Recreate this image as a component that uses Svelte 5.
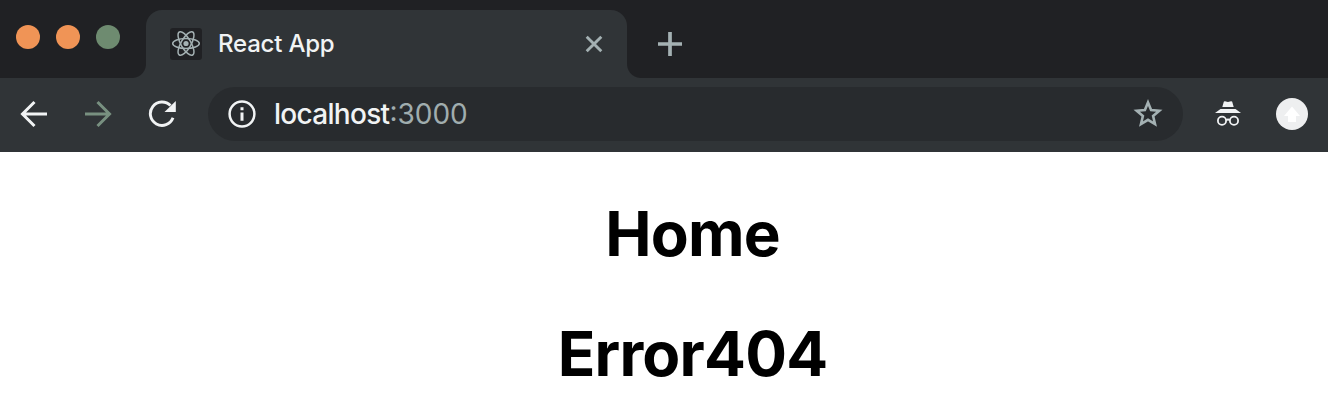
<script>
  const lights = ['#f09456', '#f09456', '#6e8b70'];
  const headings = ['Home', 'Error404'];
</script>

<div class="window">
  <header class="tabs">
    <div class="lights">
      {#each lights as color}
        <span class="light" style="background:{color}"></span>
      {/each}
    </div>
    <div class="tab">
      <svg class="favicon" viewBox="0 0 32 32" width="32" height="32">
        <rect width="32" height="32" rx="3" fill="#202124" />
        <g fill="none" stroke="#a4b1b3" stroke-width="1.5">
          <ellipse cx="16" cy="15.5" rx="13.3" ry="5" />
          <ellipse cx="16" cy="15.5" rx="13.3" ry="5" transform="rotate(60 16 15.5)" />
          <ellipse cx="16" cy="15.5" rx="13.3" ry="5" transform="rotate(120 16 15.5)" />
        </g>
        <circle cx="16" cy="15.5" r="2.6" fill="#a4b1b3" />
      </svg>
      <span class="title">React App</span>
      <svg class="close" viewBox="0 0 18 18" width="18" height="18">
        <path d="M1.7 1.7 16.3 16.3M16.3 1.7 1.7 16.3" stroke="#a4b1b3" stroke-width="2.9" />
      </svg>
    </div>
    <svg class="plus" viewBox="0 0 24 24" width="24" height="24">
      <path d="M12 0V24M0 12H24" stroke="#a4b1b3" stroke-width="3.7" />
    </svg>
  </header>

  <nav class="toolbar">
    <svg viewBox="0 0 28 28" width="28" height="28">
      <path d="M27 14H3M14.5 2 2.5 14 14.5 26" fill="none" stroke="#f1f3f4" stroke-width="3" />
    </svg>
    <svg class="forward" viewBox="0 0 28 28" width="28" height="28">
      <path d="M1 14H25M13.5 2 25.5 14 13.5 26" fill="none" stroke="#789080" stroke-width="3" />
    </svg>
    <svg class="reload" viewBox="0 0 28 28" width="28" height="28">
      <path d="M22.5 5.6A11.7 11.7 0 1 0 25 17.8" fill="none" stroke="#f1f3f4" stroke-width="2.9" />
      <path d="M27.8 .9V12.1H16.5Z" fill="#f1f3f4" />
    </svg>
    <div class="address">
      <svg class="info" viewBox="0 0 28 28" width="28" height="28">
        <circle cx="14" cy="14" r="12.4" fill="none" stroke="#f1f3f4" stroke-width="2.5" />
        <path d="M14 7.2V10.2M14 12.5V20.8" stroke="#f1f3f4" stroke-width="3" />
      </svg>
      <span class="url"><span class="host">localhost</span><span class="port">:3000</span></span>
      <svg class="star" viewBox="0 0 30 30" width="30" height="30">
        <path d="M15 3.5 18.1 11 26.3 11.7 20.1 17 22 25 15 20.8 8 25 9.9 17 3.7 11.7 11.9 11Z" fill="none" stroke="#a4b1b3" stroke-width="2.6" />
      </svg>
    </div>
    <svg class="incognito" viewBox="0 0 28 28" width="28" height="28">
      <path d="M8.3 7 9.8 1.8Q10.1 1 11 1.2L14 2 17 1.2Q17.9 1 18.2 1.8L19.7 7Z" fill="#f1f3f4" />
      <path d="M6.5 9H21.5L27 13H1Z" fill="#f1f3f4" />
      <g fill="none" stroke="#f1f3f4" stroke-width="1.8">
        <circle cx="8" cy="20.7" r="4.1" />
        <circle cx="20" cy="20.7" r="4.1" />
        <path d="M12 20.2Q14 18.8 16 20.2" />
      </g>
    </svg>
    <svg class="update" viewBox="0 0 32 32" width="32" height="32">
      <circle cx="16" cy="16" r="16" fill="#eeeff0" />
      <path d="M16 8.5 24 18H20V24H12V18H8Z" fill="#fff" />
    </svg>
  </nav>

  <main>
    {#each headings as text}
      <h1>{text}</h1>
    {/each}
  </main>
</div>

<style>
  :global(body) {
    background: #fff;
  }
  .window {
    width: 1328px;
    height: 410px;
    overflow: hidden;
    font-family: Inter, 'Liberation Sans', sans-serif;
  }
  svg {
    display: block;
    flex: none;
  }
  .tabs {
    box-sizing: border-box;
    height: 78px;
    padding-top: 10px;
    display: flex;
    background: #202124;
  }
  .lights {
    box-sizing: border-box;
    width: 146px;
    flex: none;
    padding: 15px 0 0 16px;
    display: flex;
    gap: 16px;
  }
  .light {
    width: 24px;
    height: 24px;
    border-radius: 50%;
  }
  .tab {
    box-sizing: border-box;
    position: relative;
    width: 481px;
    height: 68px;
    padding: 0 24px 0 24px;
    display: flex;
    align-items: center;
    background: #303437;
    border-radius: 16px 16px 0 0;
  }
  .tab::before,
  .tab::after {
    content: '';
    position: absolute;
    bottom: 0;
    width: 14px;
    height: 14px;
  }
  .tab::before {
    right: 100%;
    background: radial-gradient(circle at 0 0, #202124 13.5px, #303437 14.5px);
  }
  .tab::after {
    left: 100%;
    background: radial-gradient(circle at 100% 0, #202124 13.5px, #303437 14.5px);
  }
  .title {
    margin-left: 16px;
    flex: 1;
    font-size: 24px;
    font-weight: 500;
    line-height: 32px;
    letter-spacing: -0.2px;
    color: #f1f3f4;
  }
  .plus {
    margin: 22px 0 0 31px;
  }
  .toolbar {
    box-sizing: border-box;
    height: 74px;
    padding: 9px 20px 11px 20px;
    display: flex;
    align-items: center;
    background: #303437;
  }
  .forward {
    margin-left: 36px;
  }
  .reload {
    margin-left: 36px;
  }
  .address {
    box-sizing: border-box;
    width: 975px;
    height: 54px;
    margin-left: 32px;
    padding: 0 20px;
    display: flex;
    align-items: center;
    background: #282b2e;
    border-radius: 27px;
  }
  .url {
    flex: 1;
    margin-left: 18px;
    font-size: 28px;
    line-height: 36px;
    color: #f1f3f4;
  }
  .host {
    font-weight: 500;
    letter-spacing: -0.7px;
  }
  .port {
    color: #a0adae;
  }
  .incognito {
    margin-left: 31px;
  }
  .update {
    margin-left: 34px;
  }
  main {
    width: 1385px;
    padding-top: 44px;
    text-align: center;
  }
  h1 {
    margin: 0 0 44px;
    font-size: 62px;
    font-weight: 700;
    line-height: 76px;
    letter-spacing: -0.8px;
    color: #000;
  }
</style>
